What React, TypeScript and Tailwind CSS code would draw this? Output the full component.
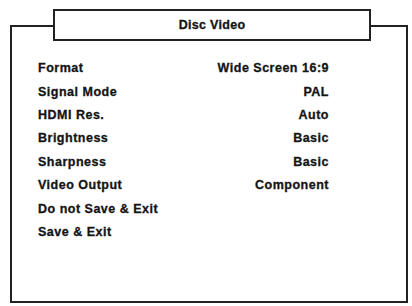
import React from 'react';

const rows = [
  { label: 'Format', value: 'Wide Screen 16:9' },
  { label: 'Signal Mode', value: 'PAL' },
  { label: 'HDMI Res.', value: 'Auto' },
  { label: 'Brightness', value: 'Basic' },
  { label: 'Sharpness', value: 'Basic' },
  { label: 'Video Output', value: 'Component' },
  { label: 'Do not Save & Exit', value: '' },
  { label: 'Save & Exit', value: '' },
];

export default function App() {
  return (
    <div className="w-[412px] h-[306px] bg-white pt-[25px] pl-[10px] font-['Liberation_Sans',Arial,sans-serif] text-[#141414]">
      <div className="w-[398px] h-[278px] border-2 border-[#222]">
        <div className="ml-[41px] mt-[-18px] w-[318px] h-[32px] border-2 border-[#222] bg-white flex items-center justify-center">
          <span className="text-[12.5px] font-bold tracking-[0.3px] [-webkit-text-stroke:0.3px_#141414]">Disc Video</span>
        </div>
        <div className="mt-[16px] pl-[26px] pr-[77px]">
          {rows.map((row) => (
            <div
              key={row.label}
              className="h-[23.4px] flex items-center justify-between text-[12.5px] font-bold tracking-[0.5px] [-webkit-text-stroke:0.3px_#141414]"
            >
              <span>{row.label}</span>
              <span>{row.value}</span>
            </div>
          ))}
        </div>
      </div>
    </div>
  );
}
